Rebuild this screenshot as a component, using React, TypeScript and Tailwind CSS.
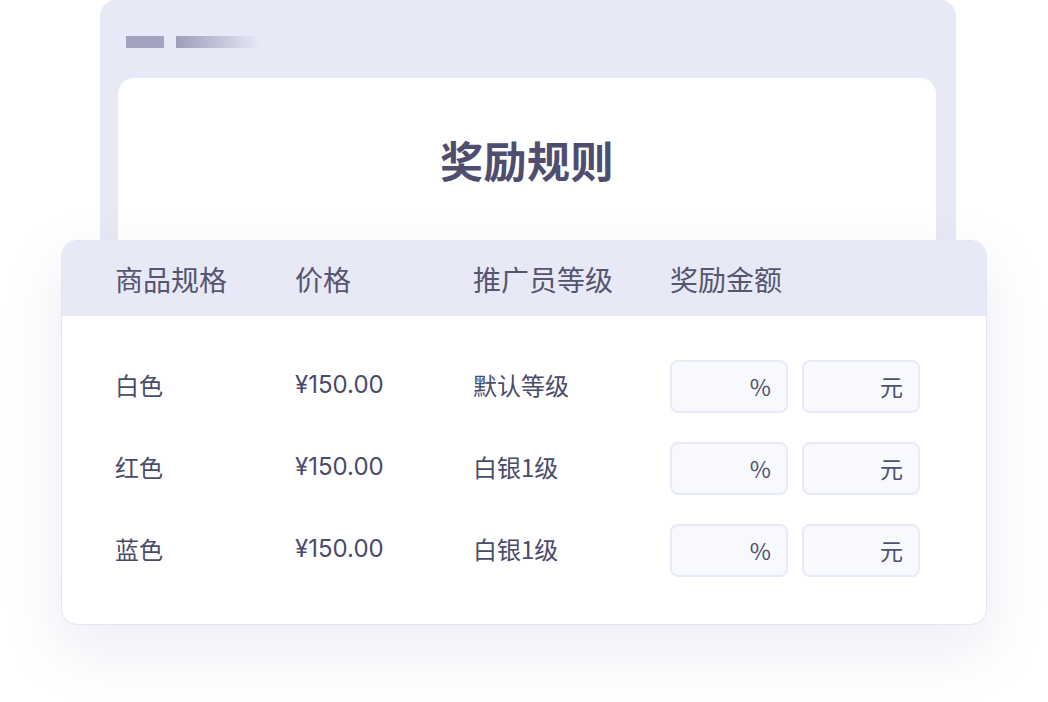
import type React from "react"

const rows = [
  { spec: "白色", price: "¥150.00", level: "默认等级" },
  { spec: "红色", price: "¥150.00", level: "白银1级" },
  { spec: "蓝色", price: "¥150.00", level: "白银1级" },
]

const font = { fontFamily: '"Noto Sans CJK SC", "Noto Sans", sans-serif' }

const UnitBox: React.FC<{ unit: string }> = ({ unit }) => (
  <div className="w-[118px] h-[53px] rounded-[8px] border-2 border-[#e8eaf7] bg-[#f7f9ff] flex items-center justify-end pr-[15px] text-[23px] text-[#4f5070]">
    {unit}
  </div>
)

const App: React.FC = () => {
  return (
    <div className="w-[1048px] h-[702px] bg-white overflow-hidden" style={font}>
      {/* back window */}
      <div className="ml-[100px] w-[856px] h-[300px] rounded-t-[16px] bg-[#e8e9f6] pl-[18px] pr-[20px] pt-[36px]">
        <div className="flex items-center gap-3 ml-2">
          <div className="w-[38px] h-[12px] bg-[#a2a3be]" />
          <div className="w-[84px] h-[12px] bg-gradient-to-r from-[#9d9eba] to-[#e8e9f6]" />
        </div>
        <div className="mt-[30px] h-[222px] rounded-t-[16px] bg-white pt-[56px] flex justify-center">
          <h1 className="text-[43px] leading-[50px] font-bold text-[#4f4e6e] tracking-[0.5px]">奖励规则</h1>
        </div>
      </div>

      {/* table card */}
      <div className="relative z-10 -mt-[60px] ml-[61px] w-[926px] rounded-[16px] bg-white border border-[#e4e5f5] overflow-hidden shadow-[0_24px_60px_rgba(110,110,180,0.13)]">
        <div className="h-[75px] bg-[#e8e9f7] flex items-center pl-[53px] text-[28px] text-[#55556f]">
          <div className="w-[180px]">商品规格</div>
          <div className="w-[178px]">价格</div>
          <div className="w-[197px]">推广员等级</div>
          <div>奖励金额</div>
        </div>
        <div className="pt-[44px] pb-[47px] flex flex-col gap-[29px]">
          {rows.map((r, i) => (
            <div key={i} className="h-[53px] flex items-center pl-[53px] text-[24px] text-[#4a4b6b]">
              <div className="w-[180px] -mt-[4px]">{r.spec}</div>
              <div className="w-[178px] -mt-[4px]" style={{ fontFamily: 'Inter, "Noto Sans CJK SC", sans-serif' }}>
                {r.price}
              </div>
              <div className="w-[197px] -mt-[4px]">{r.level}</div>
              <div className="flex gap-[14px]">
                <UnitBox unit="%" />
                <UnitBox unit="元" />
              </div>
            </div>
          ))}
        </div>
      </div>
    </div>
  )
}

export default App
